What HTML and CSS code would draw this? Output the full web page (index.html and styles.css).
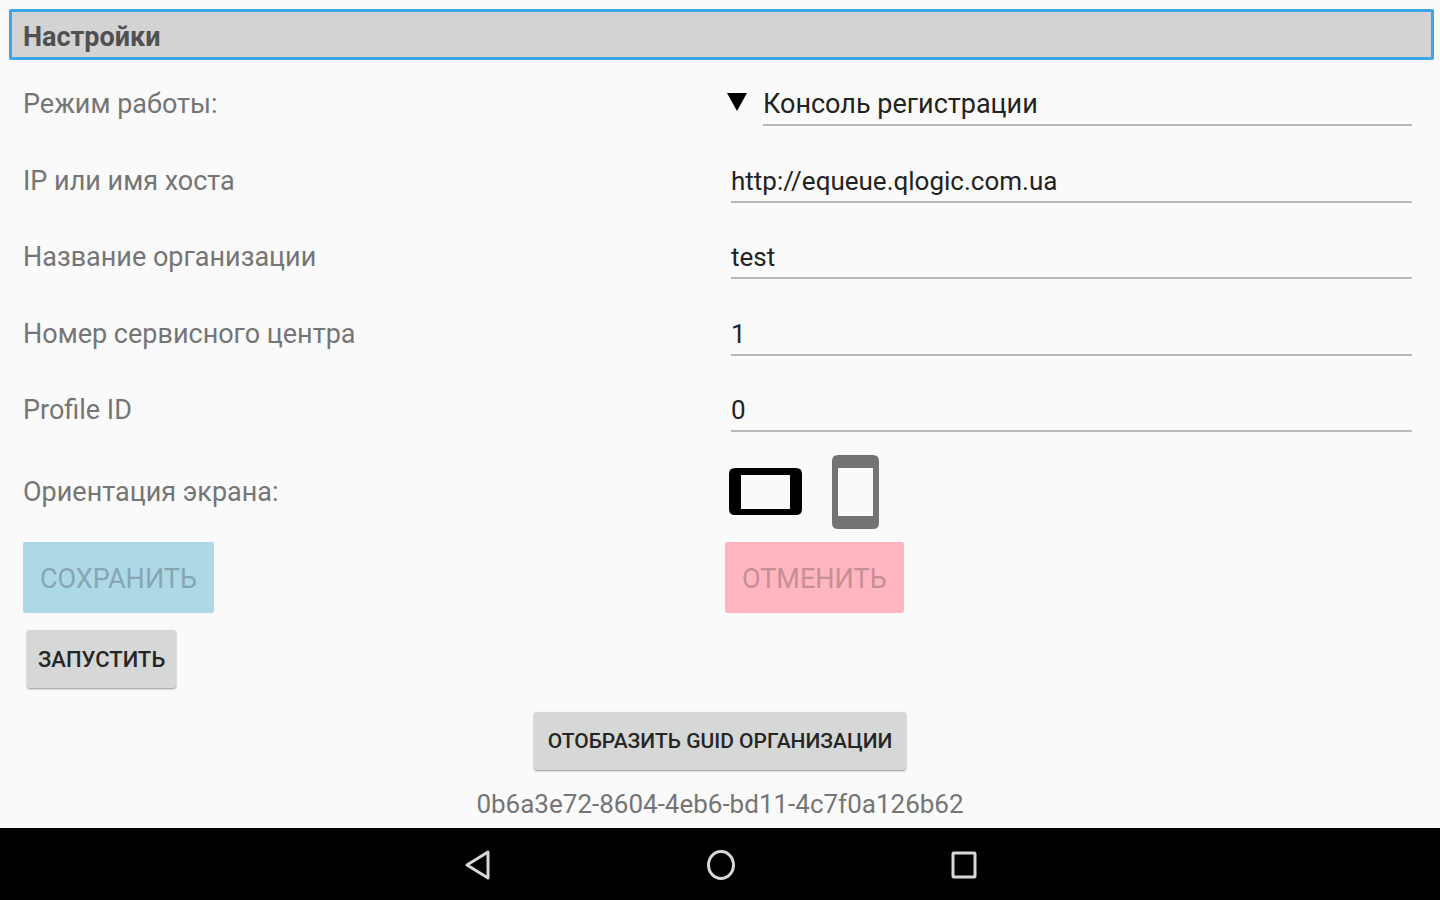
FILE: index.html
```html
<!DOCTYPE html>
<html lang="ru">
<head>
<meta charset="utf-8">
<meta name="viewport" content="width=device-width, initial-scale=1">
<title>Настройки</title>
<link rel="stylesheet" href="styles.css">
</head>
<body>
<main class="screen">
  <h1 class="title">Настройки</h1>
  <form class="settings">
    <div class="fields">
      <label class="label" for="mode">Режим работы:</label>
      <div class="control mode">
        <svg class="arrow" viewBox="0 0 20 22" aria-hidden="true"><path d="M0 0H20L10 18Z"/></svg>
        <select class="field choice" id="mode"><option>Консоль регистрации</option></select>
      </div>
      <label class="label" for="host">IP или имя хоста</label>
      <div class="control"><input class="field" id="host" type="text" value="http://equeue.qlogic.com.ua"></div>
      <label class="label" for="org">Название организации</label>
      <div class="control"><input class="field" id="org" type="text" value="test"></div>
      <label class="label" for="center">Номер сервисного центра</label>
      <div class="control"><input class="field" id="center" type="text" value="1"></div>
      <label class="label" for="profile">Profile ID</label>
      <div class="control"><input class="field" id="profile" type="text" value="0"></div>
      <span class="label" id="orientation">Ориентация экрана:</span>
      <div class="orientations" role="group" aria-labelledby="orientation">
        <button class="icon-button" type="button" aria-label="Горизонтальная">
          <svg width="74" height="48" viewBox="0 0 74 48"><path fill="#000" fill-rule="evenodd" d="M6 0H67Q73 0 73 6V41Q73 47 67 47H6Q0 47 0 41V6Q0 0 6 0ZM12 7V41H61V7Z"/></svg>
        </button>
        <button class="icon-button" type="button" aria-label="Вертикальная">
          <svg width="48" height="74" viewBox="0 0 48 74"><path fill="#737373" fill-rule="evenodd" d="M6 0H41Q47 0 47 6V68Q47 74 41 74H6Q0 74 0 68V6Q0 0 6 0ZM6 13V61H41V13Z"/></svg>
        </button>
      </div>
    </div>
    <div class="actions">
      <div><button class="action save" type="submit" disabled>СОХРАНИТЬ</button></div>
      <div><button class="action cancel" type="reset" disabled>ОТМЕНИТЬ</button></div>
    </div>
    <button class="raised launch" type="button">ЗАПУСТИТЬ</button>
  </form>
  <section class="guid">
    <button class="raised show-guid" type="button">ОТОБРАЗИТЬ GUID ОРГАНИЗАЦИИ</button>
    <output class="guid-value">0b6a3e72-8604-4eb6-bd11-4c7f0a126b62</output>
  </section>
</main>
<nav class="navbar">
  <button class="nav-button" type="button" aria-label="Назад">
    <svg width="32" height="32" viewBox="0 0 32 32"><path d="M26 3V29L5 16Z"/></svg>
  </button>
  <button class="nav-button" type="button" aria-label="Домой">
    <svg width="32" height="32" viewBox="0 0 32 32"><ellipse cx="16" cy="16" rx="12.5" ry="13.5"/></svg>
  </button>
  <button class="nav-button" type="button" aria-label="Недавние">
    <svg width="32" height="32" viewBox="0 0 32 32"><rect x="5" y="4" width="22" height="24" rx="1"/></svg>
  </button>
</nav>
</body>
</html>
```
FILE: styles.css
```css
* { box-sizing: border-box; }

body {
  margin: 0;
  min-height: 100vh;
  display: flex;
  flex-direction: column;
  background: #fafafa;
  color: #757575;
  font: 27px/32px Roboto, "Noto Sans", sans-serif;
}

button, input, select { font: inherit; }

.screen { flex: 1; padding-top: 9px; }

.title {
  margin: 0 6px 6px 9px;
  padding: 10px 11px 4px;
  border: 3px solid #3ea5e8;
  border-radius: 2px;
  background: #d3d3d3;
  color: #505050;
  font-size: 27px;
  line-height: 31px;
  font-weight: 700;
}

.settings { padding: 0 13px 0 23px; }

.fields {
  display: grid;
  grid-template-columns: 1fr 1fr;
  grid-template-rows: 76px 77px 76px 77px 76px 88px;
  align-items: center;
}

.control { display: flex; align-items: center; padding: 0 15px 0 6px; }
.mode { padding-left: 2px; }

.arrow { width: 20px; height: 22px; margin-right: 16px; fill: #000; flex: none; }

.field {
  flex: 1;
  min-width: 0;
  height: 44px;
  padding: 2px 0 0;
  border: 0;
  border-bottom: 2px solid #b8b8b8;
  border-radius: 0;
  background: transparent;
  color: #222;
  font-size: 26px;
  appearance: none;
  outline: 0;
}
.choice { font-size: 27px; }

.orientations { display: flex; align-items: center; gap: 29px; padding-left: 4px; }

.icon-button, .nav-button {
  display: flex;
  padding: 0;
  border: 0;
  background: none;
}

.actions { display: grid; grid-template-columns: 1fr 1fr; padding-top: 6px; }

.action {
  display: block;
  height: 71px;
  padding: 2px 17px 0;
  border: 0;
  border-radius: 2px;
}
.save { background: #add8e6; color: #86a7b2; }
.cancel { background: #ffb6c1; color: #c68e97; }

.raised {
  display: block;
  height: 58px;
  border: 0;
  border-radius: 3px;
  background: #d6d7d7;
  box-shadow: 0 1px 2px #0006;
  color: #262626;
  font-weight: 500;
}
.launch { margin: 17px 0 0 4px; padding: 2px 11px 0; font-size: 22px; }
.show-guid { padding: 0 14px; font-size: 21px; }

.guid {
  display: flex;
  flex-direction: column;
  align-items: center;
  gap: 18px;
  padding-top: 24px;
}
.guid-value { font-size: 26px; }

.navbar {
  display: flex;
  justify-content: center;
  gap: 211px;
  padding: 21px 0 19px 2px;
  background: #000;
}
.nav-button svg { fill: none; stroke: #d8d8d8; stroke-width: 3; stroke-linejoin: round; }
```
